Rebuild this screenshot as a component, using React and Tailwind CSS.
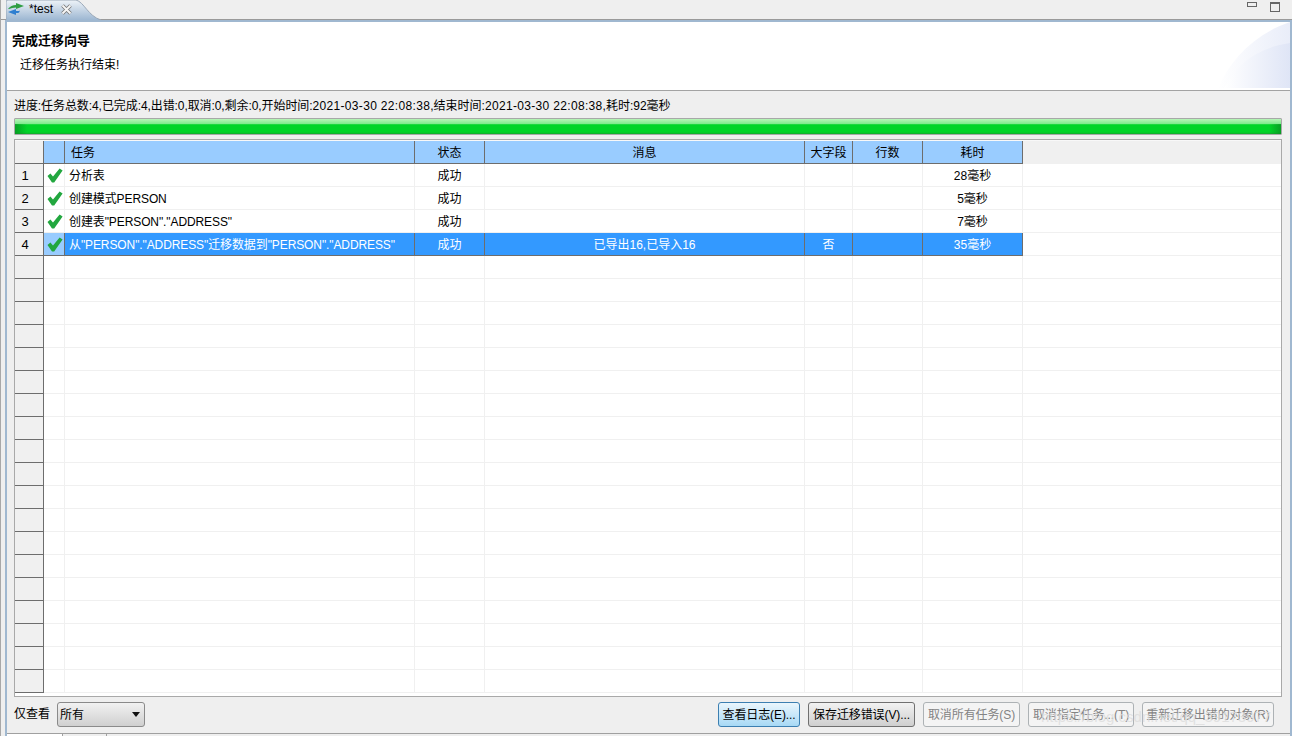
const COLS = [
  { w: 'w-[350px]', label: '任务' },
  { w: 'w-[70px]', label: '状态' },
  { w: 'w-[320px]', label: '消息' },
  { w: 'w-[48px]', label: '大字段' },
  { w: 'w-[70px]', label: '行数' },
  { w: 'w-[100px]', label: '耗时' },
];

const ROWS = [
  ['分析表', '成功', '', '', '', '28毫秒'],
  ['创建模式PERSON', '成功', '', '', '', '5毫秒'],
  ['创建表"PERSON"."ADDRESS"', '成功', '', '', '', '7毫秒'],
  ['从"PERSON"."ADDRESS"迁移数据到"PERSON"."ADDRESS"', '成功', '已导出16,已导入16', '否', '', '35毫秒'],
];

function Check() {
  return (
    <svg width="16" height="15" viewBox="0 0 16 15" className="block ml-[2px]">
      <path d="M0.5 8 L3.4 5.6 L6 8.6 L12.6 0.4 L15.6 2.4 L7.2 14.4 L5 14.4 Z" fill="#22a73f" />
    </svg>
  );
}

function Row({ n, cells, selected }) {
  return (
    <div className="flex h-[23px] shrink-0">
      <div className="w-[29px] shrink-0 flex items-center justify-center pr-[8px] pt-[1px] text-[13px] bg-[#f0f0f0] border-b border-r border-[#6d6d6d]">
        {n}
      </div>
      <div className={`w-[21px] shrink-0 flex items-center justify-center border-r border-b ${selected ? 'bg-[#99ccff] border-[#6d6d6d]' : 'border-[#f0f0f0]'}`}>
        {cells && <Check />}
      </div>
      {COLS.map((c, i) => (
        <div
          key={c.label}
          className={`${c.w} shrink-0 flex items-center pt-[1px] border-r border-b overflow-hidden whitespace-nowrap ${i === 0 ? 'pl-[4px] tracking-[-0.1px]' : 'justify-center'} ${selected ? 'bg-[#3399ff] text-white border-[#6d6d6d]' : 'border-[#f0f0f0]'}`}
        >
          {cells ? cells[i] : ''}
        </div>
      ))}
      <div className="flex-1 border-b border-[#f0f0f0]" />
    </div>
  );
}

function Btn({ label, tone, w }) {
  const tones = {
    focus: 'border-[#3c7fb1] bg-gradient-to-b from-[#eaf6fd] to-[#a7d9f5] text-black',
    normal: 'border-[#707070] bg-gradient-to-b from-[#f2f2f2] to-[#cfcfcf] text-black',
    off: 'border-[#adb2b5] bg-[#f4f4f4] text-[#838383]',
  };
  return (
    <div className={`${w} h-[25px] flex items-center justify-center rounded-[3px] border whitespace-nowrap tracking-[-0.1px] ${tones[tone]}`}>
      {label}
    </div>
  );
}

export default function App() {
  return (
    <div className="relative w-[1292px] h-[736px] overflow-hidden bg-[#efefef] border-l border-[#a8a8a8] text-[12px] text-black font-['Liberation_Sans','Noto_Sans_CJK_SC',sans-serif] flex flex-col">
      {/* Editor tab strip */}
      <div className="h-[20px] shrink-0 flex items-stretch border-b border-[#9a9a9a] pl-[5px]">
        <div className="relative w-[95px] h-[20px] flex items-center pl-[2px]">
          <svg width="95" height="20" viewBox="0 0 95 20" className="absolute left-0 top-0">
            <defs>
              <linearGradient id="tab" x1="0" y1="0" x2="0" y2="1">
                <stop offset="0" stopColor="#eef3f8" />
                <stop offset="1" stopColor="#9db7d2" />
              </linearGradient>
            </defs>
            <path d="M0 20 L0 2 Q0 0 2 0 L70 0 C78 2 82 16 95 20 Z" fill="url(#tab)" />
            <path d="M0 20 L0 2 Q0 0 2 0 L70 0 C78 2 82 16 95 20" fill="none" stroke="#9aa8b8" />
          </svg>
          <svg width="16" height="12" viewBox="0 0 16 12" className="relative mb-[2px]">
            <path d="M0 6 Q3 2 8 2 V0 L16 3 L8 6 V4.5 Q4 4.5 1 6 Z" fill="#2f9e44" />
            <path d="M12 6.5 V8 H8 V6 L0 9 L8 12 V10 H10 Q11.5 10 12 6.5 Z" fill="#2f7fd0" />
          </svg>
          <span className="relative ml-[5px] text-[12px] leading-none mb-[2px]">*test</span>
          <span className="relative ml-[8px] w-[11px] h-[11px] mb-[2px] flex items-center justify-center">
            <svg width="11" height="11" viewBox="0 0 11 11">
              <path d="M1.5 1.5 L9.5 9.5 M9.5 1.5 L1.5 9.5" stroke="#777" strokeWidth="3.6" />
              <path d="M1.5 1.5 L9.5 9.5 M9.5 1.5 L1.5 9.5" stroke="#f5f5f5" strokeWidth="2" />
            </svg>
          </span>
        </div>
        <div className="flex-1 flex justify-end items-start gap-[13px] pr-[12px] pt-[2px]">
          <div className="w-[10px] h-[5px] border border-[#666]" />
          <div className="w-[10px] h-[10px] border border-[#666] border-t-2" />
        </div>
      </div>
      <div className="h-[2px] shrink-0 bg-[#a0b8d0] ml-[4px]" />

      <div className="flex-1 min-h-0 flex flex-col border-l-2 border-r-2 border-[#a0b8d0] ml-[4px]">
        {/* Wizard banner */}
        <div className="relative h-[69px] shrink-0 bg-white border-b border-[#a3a3a3] overflow-hidden">
          <div className="pl-[5px] pt-[10px] font-bold text-[13px] leading-[18px]">完成迁移向导</div>
          <div className="pl-[13px] pt-[6px] leading-[18px]">迁移任务执行结束!</div>
          <div className="absolute right-0 top-0 w-[72px] h-[66px]">
            <svg width="72" height="66" viewBox="0 0 72 66">
              <defs>
                <linearGradient id="g1" x1="0" y1="0" x2="1" y2="0">
                  <stop offset="0" stopColor="#ffffff" />
                  <stop offset="1" stopColor="#dfe5f6" />
                </linearGradient>
                <linearGradient id="g2" x1="0" y1="0" x2="1" y2="0">
                  <stop offset="0" stopColor="#ffffff" />
                  <stop offset="1" stopColor="#e9edf9" />
                </linearGradient>
              </defs>
              <path d="M0 66 C12 38 36 12 72 0 V66 Z" fill="url(#g2)" />
              <path d="M6 66 C20 40 40 26 72 21 V66 Z" fill="url(#g1)" />
            </svg>
          </div>
        </div>

        <div className="flex-1 min-h-0 flex flex-col pl-[7px] pr-[8px] bg-[#efefef]">
          {/* Progress */}
          <div className="h-[27px] shrink-0 pt-[6px] leading-[18px] whitespace-nowrap">
            <span className="tracking-[-0.08px]">进度:任务总数:4,已完成:4,出错:0,取消:0,剩余:0,开始时间:</span>
            <span className="tracking-[0.33px]">2021-03-30 22:08:38</span>
            <span>,结束时间:</span>
            <span className="tracking-[0.33px]">2021-03-30 22:08:38</span>
            <span>,耗时:92毫秒</span>
          </div>
          <div className="relative h-[17px] shrink-0 border border-[#a8a8a8] overflow-hidden rounded-[1px] bg-[linear-gradient(to_bottom,#b8f5b8_0%,#7dea8c_32%,#00d428_38%,#00d428_88%,#14a82c_100%)]">
            <div className="absolute left-0 top-[5px] bottom-0 w-[12px] bg-gradient-to-r from-[#0a8a22]/70 to-transparent" />
            <div className="absolute right-0 top-[5px] bottom-0 w-[12px] bg-gradient-to-l from-[#0a8a22]/70 to-transparent" />
          </div>

          {/* Table */}
          <div className="mt-[4px] h-[558px] shrink-0 border border-[#a9a9a9] bg-white overflow-hidden">
            <div className="flex h-[24px] shrink-0 bg-[#f0f0f0] border-t border-[#f8f8f8]">
              <div className="w-[29px] shrink-0 border-b border-r border-[#6d6d6d]" />
              <div className="w-[21px] shrink-0 bg-[#99ccff] border-b border-r border-[#6d6d6d]" />
              {COLS.map((c, i) => (
                <div
                  key={c.label}
                  className={`${c.w} shrink-0 flex items-center pt-[1px] bg-[#99ccff] border-b border-r border-[#6d6d6d] ${i === 0 ? 'pl-[6px]' : 'justify-center'}`}
                >
                  {c.label}
                </div>
              ))}
            </div>
            <div className="flex flex-col">
              {ROWS.map((cells, i) => (
                <Row key={i} n={i + 1} cells={cells} selected={i === 3} />
              ))}
              {Array.from({ length: 19 }).map((_, i) => (
                <Row key={i} />
              ))}
            </div>
          </div>

          {/* Footer */}
          <div className="flex-1 min-h-0 pt-[5px] flex items-start whitespace-nowrap">
            <span className="leading-[25px]">仅查看</span>
            <div className="ml-[7px] w-[88px] h-[25px] rounded-[3px] border border-[#8a8a8a] bg-gradient-to-b from-[#f2f2f2] to-[#cfcfcf] flex items-center justify-between pl-[2px] pr-[4px]">
              <span>所有</span>
              <svg width="8" height="5" viewBox="0 0 8 5"><path d="M0 0 H8 L4 5 Z" fill="#111" /></svg>
            </div>
            <div className="ml-auto pr-[8px] flex items-center gap-[8px]">
              <Btn w="w-[82px]" label="查看日志(E)..." tone="focus" />
              <Btn w="w-[107px]" label="保存迁移错误(V)..." tone="normal" />
              <Btn w="w-[97px]" label="取消所有任务(S)" tone="off" />
              <Btn w="w-[106px]" label="取消指定任务...(T)" tone="off" />
              <Btn w="w-[132px]" label="重新迁移出错的对象(R)" tone="off" />
            </div>
          </div>
        </div>

        {/* Bottom tab strip */}
        <div className="h-[3px] shrink-0 flex border-t border-[#a0a0a0]">
          <div className="w-[55px] bg-white" />
          <div className="w-[45px] border-l border-r border-[#a0a0a0]" />
        </div>
      </div>

      {/* Watermark */}
      <div className="absolute left-[1040px] top-[706px] text-[#dcdcdc]/80 text-[15px] whitespace-nowrap pointer-events-none">
        https://blog.csdn.net/qq_39173977
      </div>
    </div>
  );
}
